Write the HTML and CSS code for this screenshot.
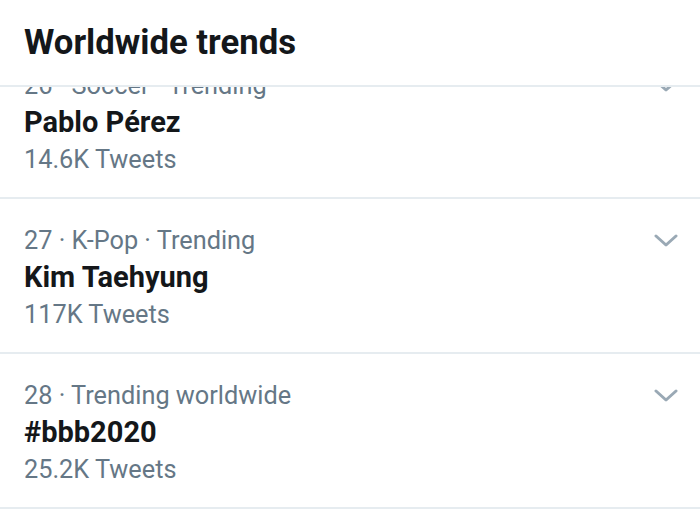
FILE: index.html
```html
<!DOCTYPE html>
<html lang="en">
<head>
<meta charset="utf-8">
<title>Worldwide trends</title>
<link rel="stylesheet" href="styles.css">
</head>
<body>
<div class="screen">
  <header class="header">
    <h1 class="title">Worldwide trends</h1>
  </header>
  <div class="list">
    <div class="trends">
      <div class="trend">
        <div class="info">
          <div class="meta">26 · Soccer · Trending</div>
          <div class="name">Pablo Pérez</div>
          <div class="count">14.6K Tweets</div>
        </div>
        <svg class="chev" viewBox="0 0 24 13" width="24" height="13"><path d="M2 2 L12 11 L22 2" fill="none" stroke="currentColor" stroke-width="3" stroke-linecap="round" stroke-linejoin="round"/></svg>
      </div>
      <div class="trend">
        <div class="info">
          <div class="meta">27 · K-Pop · Trending</div>
          <div class="name">Kim Taehyung</div>
          <div class="count">117K Tweets</div>
        </div>
        <svg class="chev" viewBox="0 0 24 13" width="24" height="13"><path d="M2 2 L12 11 L22 2" fill="none" stroke="currentColor" stroke-width="3" stroke-linecap="round" stroke-linejoin="round"/></svg>
      </div>
      <div class="trend">
        <div class="info">
          <div class="meta">28 · Trending worldwide</div>
          <div class="name">#bbb2020</div>
          <div class="count">25.2K Tweets</div>
        </div>
        <svg class="chev" viewBox="0 0 24 13" width="24" height="13"><path d="M2 2 L12 11 L22 2" fill="none" stroke="currentColor" stroke-width="3" stroke-linecap="round" stroke-linejoin="round"/></svg>
      </div>
    </div>
  </div>
</div>
</body>
</html>
```
FILE: styles.css
```css
* { box-sizing: border-box; }
html, body {
  margin: 0;
  padding: 0;
  background: #ffffff;
}
body {
  font-family: Roboto, "Liberation Sans", Arial, sans-serif;
  color: #14171a;
}
.screen {
  width: 700px;
  height: 512px;
  overflow: hidden;
  display: flex;
  flex-direction: column;
}
.header {
  height: 87px;
  flex: none;
  border-bottom: 2px solid #e6ecf0;
  display: flex;
  align-items: center;
  padding: 0 24px;
}
.title {
  margin: 0;
  font-size: 34.7px;
  font-weight: 700;
  color: #14171a;
  padding-bottom: 2px;
}
.list {
  flex: 1;
  overflow: hidden;
}
.trends {
  margin-top: -43px;
}
.trend {
  height: 155px;
  border-bottom: 2px solid #e6ecf0;
  padding: 23px 22px 0 24px;
  display: flex;
  justify-content: space-between;
  align-items: flex-start;
}
.info {
  display: flex;
  flex-direction: column;
}
.meta, .count {
  font-size: 25.3px;
  line-height: 37px;
  color: #657786;
}
.name {
  font-size: 29px;
  line-height: 37px;
  font-weight: 700;
  color: #14171a;
}
.chev {
  color: #9aa9b5;
  margin-top: 12px;
}
```
